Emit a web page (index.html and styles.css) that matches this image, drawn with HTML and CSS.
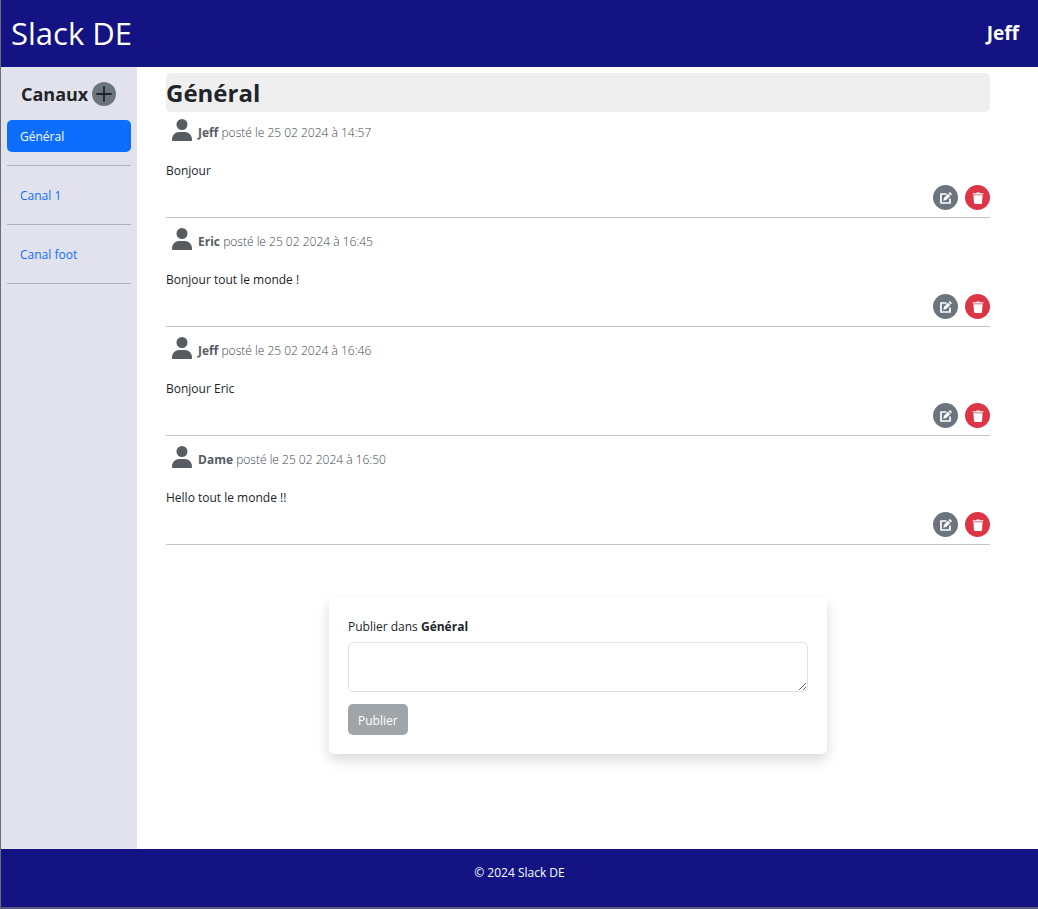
FILE: index.html
```html
<!DOCTYPE html>
<html lang="fr">
<head>
<meta charset="utf-8">
<title>Slack DE</title>
<link rel="stylesheet" href="styles.css">
</head>
<body>
<svg class="sprite" aria-hidden="true">
  <symbol id="person" viewBox="0 0 20 22"><circle cx="10" cy="5.5" r="5.5"/><path d="M.5 22Q0 22 0 20.500C0 16 3.500 13 7 13H13C16.500 13 20 16 20 20.500Q20 22 19.500 22Z"/></symbol>
  <symbol id="plus" viewBox="0 0 16 16"><path d="M8 1V15M1 8H15" stroke="currentColor" stroke-width="1.800" stroke-linecap="round"/></symbol>
  <symbol id="edit" viewBox="0 0 12 12"><path d="M6.500 2H1V11H10V6.500" fill="none" stroke="currentColor" stroke-width="1.700"/><path d="M3.300 8.700L4 5.800L8 1.800L10.200 4L6.200 8ZM8.600 1.200L9.300.5Q10 0 10.600.5L11.500 1.400Q12 2 11.500 2.700L10.800 3.400Z"/></symbol>
  <symbol id="trash" viewBox="0 0 12 12"><path d="M.7 1.200H4L4.500.4H7.500L8 1.200H11.300V2.600H.7ZM1.400 3.200H10.600L10 11Q9.900 12 8.900 12H3.100Q2.100 12 2 11Z"/></symbol>
</svg>
<div class="app">
  <header class="header">
    <h1 class="brand">Slack DE</h1>
    <strong class="user">Jeff</strong>
  </header>
  <div class="body">
    <aside class="sidebar">
      <div class="sidebar-head">
        <h2 class="sidebar-title">Canaux</h2>
        <button class="round add" type="button" aria-label="Ajouter un canal"><svg class="icon-plus"><use href="#plus"/></svg></button>
      </div>
      <nav class="channels">
        <div class="channel"><a class="channel-link active" href="#general">Général</a></div>
        <div class="channel"><a class="channel-link" href="#canal-1">Canal 1</a></div>
        <div class="channel"><a class="channel-link" href="#canal-foot">Canal foot</a></div>
      </nav>
    </aside>
    <main class="main">
      <h2 class="title">Général</h2>
      <div class="messages">
        <article class="message">
          <div class="meta"><svg class="avatar"><use href="#person"/></svg><span><strong>Jeff</strong> posté le 25 02 2024 à 14:57</span></div>
          <p class="text">Bonjour</p>
          <div class="actions"><button class="round edit" type="button" aria-label="Modifier"><svg class="icon"><use href="#edit"/></svg></button><button class="round delete" type="button" aria-label="Supprimer"><svg class="icon"><use href="#trash"/></svg></button></div>
        </article>
        <article class="message">
          <div class="meta"><svg class="avatar"><use href="#person"/></svg><span><strong>Eric</strong> posté le 25 02 2024 à 16:45</span></div>
          <p class="text">Bonjour tout le monde !</p>
          <div class="actions"><button class="round edit" type="button" aria-label="Modifier"><svg class="icon"><use href="#edit"/></svg></button><button class="round delete" type="button" aria-label="Supprimer"><svg class="icon"><use href="#trash"/></svg></button></div>
        </article>
        <article class="message">
          <div class="meta"><svg class="avatar"><use href="#person"/></svg><span><strong>Jeff</strong> posté le 25 02 2024 à 16:46</span></div>
          <p class="text">Bonjour Eric</p>
          <div class="actions"><button class="round edit" type="button" aria-label="Modifier"><svg class="icon"><use href="#edit"/></svg></button><button class="round delete" type="button" aria-label="Supprimer"><svg class="icon"><use href="#trash"/></svg></button></div>
        </article>
        <article class="message">
          <div class="meta"><svg class="avatar"><use href="#person"/></svg><span><strong>Dame</strong> posté le 25 02 2024 à 16:50</span></div>
          <p class="text">Hello tout le monde !!</p>
          <div class="actions"><button class="round edit" type="button" aria-label="Modifier"><svg class="icon"><use href="#edit"/></svg></button><button class="round delete" type="button" aria-label="Supprimer"><svg class="icon"><use href="#trash"/></svg></button></div>
        </article>
      </div>
      <form class="composer">
        <label for="message">Publier dans <strong>Général</strong></label>
        <textarea class="field" id="message"></textarea>
        <button class="publish" type="submit" disabled>Publier</button>
      </form>
    </main>
  </div>
  <footer class="footer">© 2024 Slack DE</footer>
</div>
</body>
</html>
```
FILE: styles.css
```css
* { box-sizing: border-box; }
body {
  margin: 0;
  font: 12px/20px "Segoe UI", "Open Sans", "Noto Sans", sans-serif;
  color: #212529;
  background: #fff;
}
h1, h2, p { margin: 0; }
button { font: inherit; border: 0; padding: 0; }
.sprite { position: absolute; width: 0; height: 0; }
.app {
  display: flex;
  flex-direction: column;
  min-height: 100vh;
  border-left: 1px solid #6c6c78;
  border-bottom: 2px solid #5a5778;
}
.header {
  display: flex;
  align-items: center;
  justify-content: space-between;
  padding: 9px 19px 11px 10px;
  min-height: 67px;
  background: #131383;
  color: #fff;
}
.brand { font-size: 31px; line-height: 46px; font-weight: 400; }
.user { font-size: 19px; line-height: 26px; }
.body { display: flex; flex: 1; }
.sidebar { width: 136px; padding: 13px 6px; background: #e2e2ec; }
.sidebar-head { display: flex; align-items: center; gap: 4px; padding: 0 14px 12px; }
.sidebar-title { font-size: 18px; line-height: 28px; font-weight: 700; }
.round {
  display: flex;
  flex: none;
  align-items: center;
  justify-content: center;
  width: 25px;
  height: 25px;
  border-radius: 50%;
  color: #fff;
}
.add { width: 24px; height: 24px; background: #6c757d; color: #212529; }
.edit { background: #6c757d; }
.delete { background: #dc3545; }
.icon { width: 12px; height: 12px; fill: currentColor; }
.icon-plus { width: 16px; height: 16px; }
.channels { display: flex; flex-direction: column; gap: 13px; }
.channel { padding-bottom: 13px; border-bottom: 1px solid #adafba; }
.channel-link {
  display: block;
  padding: 7px 13px 5px;
  border-radius: 5px;
  color: #0d6efd;
  text-decoration: none;
}
.channel-link.active { background: #0d6efd; color: #fff; }
.main { flex: 1; min-width: 0; padding: 6px 48px 94px 29px; }
.title {
  padding-top: 1px;
  border-radius: 5px;
  background: #efefef;
  font-size: 24px;
  line-height: 38px;
  font-weight: 700;
}
.messages { display: grid; gap: 3px; }
.message { padding: 7px 0; border-bottom: 1px solid #c2c4c6; }
.meta {
  display: flex;
  align-items: flex-end;
  gap: 6px;
  padding-left: 6px;
  color: #565c5f;
}
.meta span { color: #42484c; font-weight: 300; }
.meta strong { color: #565c5f; font-weight: 700; }
.avatar { width: 20px; height: 22px; fill: currentColor; margin-bottom: 2px; }
.text { padding: 18px 0 4px; }
.actions { display: flex; justify-content: flex-end; gap: 7px; }
.composer {
  display: flex;
  flex-direction: column;
  align-items: flex-start;
  max-width: 498px;
  margin: 52px auto 0;
  padding: 20px 19px 19px;
  border-radius: 5px;
  background: #fff;
  box-shadow: 0 6px 13px rgba(0, 0, 0, .15);
}
.field {
  width: 100%;
  height: 50px;
  margin: 5px 0 12px;
  padding: 5px 10px;
  border: 1px solid #dee2e6;
  border-radius: 5px;
  background: #fff;
  font: inherit;
  color: inherit;
  resize: vertical;
}
.publish {
  padding: 7px 10px 4px;
  border-radius: 5px;
  background: #a0a5aa;
  color: #fff;
}
.footer {
  padding: 14px 12px 24px;
  background: #131383;
  color: #fff;
  text-align: center;
}
```
